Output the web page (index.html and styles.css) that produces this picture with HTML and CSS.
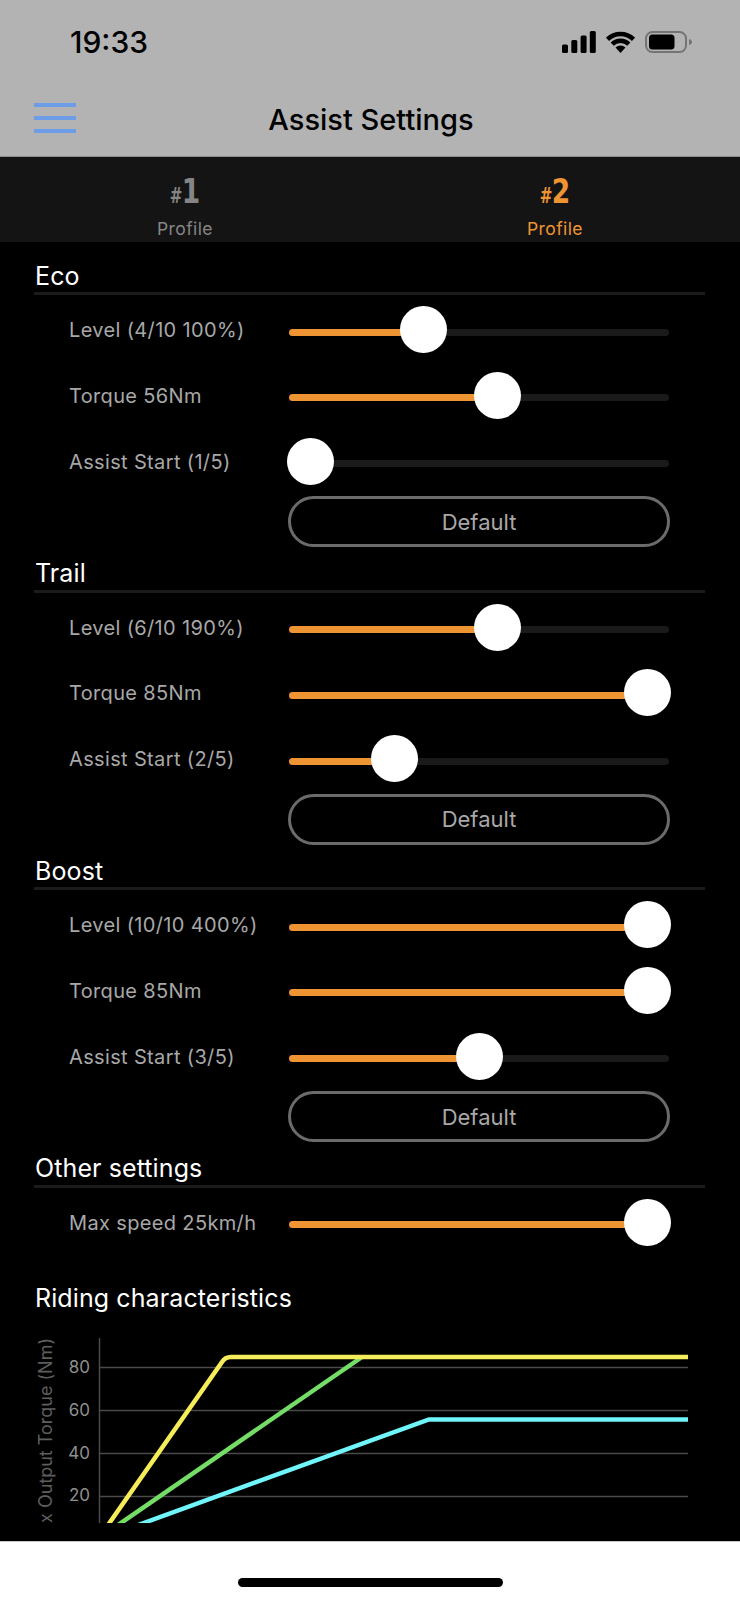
FILE: index.html
```html
<!DOCTYPE html>
<html lang="en">
<head>
<meta charset="utf-8">
<title>Assist Settings</title>
<link rel="stylesheet" href="styles.css">
</head>
<body>
<div class="phone">
  <header class="top">
    <div class="status">
      <span class="time">19:33</span>
      <div class="status-icons">
        <svg class="signal" width="34" height="22" viewBox="0 0 34 22"><rect x="0" y="13.500" width="6" height="8.500" rx="1.500"/><rect x="9.300" y="9" width="6" height="13" rx="1.500"/><rect x="18.600" y="4.500" width="6" height="17.500" rx="1.500"/><rect x="27.800" y="0" width="6" height="22" rx="1.500"/></svg>
        <svg class="wifi" width="29" height="22" viewBox="0 0 29 22"><path d="M14.500 22 9.500 16.500a7 7 0 0 1 10 0Z"/><path d="M1.500 8.300a18.500 18.500 0 0 1 26 0" class="arc"/><path d="M6.200 13.200a11.800 11.800 0 0 1 16.600 0" class="arc"/></svg>
        <svg class="battery" width="48" height="22" viewBox="0 0 48 22"><rect class="shell" x="1" y="1" width="40" height="20" rx="6.500"/><rect x="4" y="3.500" width="25.500" height="15" rx="3.500"/><path class="nub" d="M44 8c2 .5 3 1.500 3 3s-1 2.500-3 3Z"/></svg>
      </div>
    </div>
    <nav class="nav">
      <div class="menu"><i></i><i></i><i></i></div>
      <h1>Assist Settings</h1>
    </nav>
  </header>

  <div class="tabs">
    <div class="tab"><div class="num"><small>#</small><b>1</b></div><div class="tab-label">Profile</div></div>
    <div class="tab active"><div class="num"><small>#</small><b>2</b></div><div class="tab-label">Profile</div></div>
  </div>

  <main class="content">
    <section>
      <h2>Eco</h2>
      <div class="row"><span class="label">Level (4/10 100%)</span><div class="slider" style="--v:.335"><div class="fill"></div><div class="thumb"></div></div></div>
      <div class="row"><span class="label">Torque 56Nm</span><div class="slider" style="--v:.555"><div class="fill"></div><div class="thumb"></div></div></div>
      <div class="row"><span class="label">Assist Start (1/5)</span><div class="slider" style="--v:0"><div class="fill"></div><div class="thumb"></div></div></div>
      <div class="row-btn"><button class="btn">Default</button></div>
    </section>
    <section>
      <h2>Trail</h2>
      <div class="row"><span class="label">Level (6/10 190%)</span><div class="slider" style="--v:.555"><div class="fill"></div><div class="thumb"></div></div></div>
      <div class="row"><span class="label">Torque 85Nm</span><div class="slider" style="--v:1"><div class="fill"></div><div class="thumb"></div></div></div>
      <div class="row"><span class="label">Assist Start (2/5)</span><div class="slider" style="--v:.25"><div class="fill"></div><div class="thumb"></div></div></div>
      <div class="row-btn"><button class="btn">Default</button></div>
    </section>
    <section>
      <h2>Boost</h2>
      <div class="row"><span class="label">Level (10/10 400%)</span><div class="slider" style="--v:1"><div class="fill"></div><div class="thumb"></div></div></div>
      <div class="row"><span class="label">Torque 85Nm</span><div class="slider" style="--v:1"><div class="fill"></div><div class="thumb"></div></div></div>
      <div class="row"><span class="label">Assist Start (3/5)</span><div class="slider" style="--v:.5"><div class="fill"></div><div class="thumb"></div></div></div>
      <div class="row-btn"><button class="btn">Default</button></div>
    </section>
    <section>
      <h2>Other settings</h2>
      <div class="row"><span class="label">Max speed 25km/h</span><div class="slider" style="--v:1"><div class="fill"></div><div class="thumb"></div></div></div>
    </section>
    <h2 class="plain">Riding characteristics</h2>
    <svg class="chart" width="740" height="186" viewBox="0 1338 740 186">
      <g class="grid">
        <path d="M99.500 1339V1524"/>
        <path d="M100 1368.500H688M100 1411.500H688M100 1454.500H688M100 1497.500H688"/>
      </g>
      <g class="ticks">
        <text x="90" y="1374">80</text>
        <text x="90" y="1417">60</text>
        <text x="90" y="1460">40</text>
        <text x="90" y="1502">20</text>
      </g>
      <text class="axis" transform="translate(52 1524) rotate(-90)">x Output Torque (Nm)</text>
      <g class="lines">
        <path class="c" d="M138 1526 429 1420.500H688"/>
        <path class="g" d="M118 1526 362 1358"/>
        <path class="y" d="M108 1526 222 1363Q225 1358 231 1358H688"/>
      </g>
    </svg>
  </main>

  <footer class="home"><div class="indicator"></div></footer>
</div>
</body>
</html>
```

FILE: styles.css
```css
* { box-sizing: border-box; }
html, body { margin: 0; padding: 0; background: #fff; }
body { font-family: Inter, "Liberation Sans", sans-serif; }
.phone { width: 740px; height: 1600px; display: flex; flex-direction: column; overflow: hidden; }

.top { height: 157px; background: #b3b3b3; border-bottom: 1px solid #8c8c8c; flex: none; }
.status { height: 84px; padding: 0 47px 0 70px; display: flex; align-items: center; justify-content: space-between; }
.time { font-size: 30px; font-weight: 500; color: #000; }
.status-icons { display: flex; align-items: center; gap: 10px; }
.signal, .wifi path, .battery rect { fill: #000; }
.wifi .arc { fill: none; stroke: #000; stroke-width: 4.500; }
.battery .shell { fill: none; stroke: #747474; stroke-width: 2; }
.battery .nub { fill: #747474; }

.nav { height: 72px; display: flex; align-items: center; justify-content: center; padding: 0 0 2px 34px; position: relative; }
.menu { position: absolute; left: 34px; top: 19px; width: 42px; display: flex; flex-direction: column; gap: 9.500px; }
.menu i { display: block; height: 3.500px; background: #6d9de6; }
.nav h1 { margin: 0 32px 0 0; font-size: 29px; font-weight: 500; color: #000; }

.tabs { height: 85px; flex: none; background: #141414; display: flex; }
.tab { width: 370px; display: flex; flex-direction: column; align-items: center; padding-top: 15px; color: #858585; }
.tab.active { color: #ef9433; }
.num { font-family: "DejaVu Sans", sans-serif; font-weight: 700; font-size: 34px; line-height: 38px; height: 38px; display: flex; align-items: baseline; margin-right: 6px; }
.num b { display: block; width: 17px; text-align: center; transform: scaleX(.78); }
.num small { font-size: 21px; font-weight: 700; display: block; width: 12px; transform: scaleX(.72); }
.tab-label { font-size: 17.500px; line-height: 24px; margin-top: 7px; letter-spacing: .4px; }

.content { flex: 1; background: #000; padding: 8px 0 0; overflow: hidden; }
section { padding: 0 35px 0 34px; }
h2 { margin: 0 0 2px; height: 45.400px; padding: 10px 0 0 1px; font-size: 25px; line-height: 32px; font-weight: 400; letter-spacing: .1px; color: #fff; border-bottom: 3px solid #1b1b1b; }
h2.plain { border: 0; padding: 0 0 0 35px; height: auto; margin: 27px 0 22.500px; }

.row { height: 65.700px; padding-left: 35px; display: flex; align-items: center; }
.label { width: 220px; flex: none; font-size: 20px; letter-spacing: .35px; color: #a8a8a8; white-space: nowrap; }
.slider { position: relative; width: 380px; height: 7px; margin-top: 4px; background: #1a1a1a; border-radius: 4px; }
.fill { height: 100%; width: calc(var(--v) * 337px + 21px); max-width: 100%; background: #ef9433; border-radius: 4px; }
.thumb { position: absolute; top: -22.500px; left: calc(var(--v) * 337px - 2px); width: 47px; height: 47px; border-radius: 50%; background: #fff; }

.row-btn { padding-left: 254px; margin-top: 2px; }
.btn { display: block; width: 382px; height: 51px; border: 3px solid #6b6b6b; border-radius: 26px; background: transparent; color: #a8a8a8; font: 400 22px Inter, "Liberation Sans", sans-serif; padding: 0; }

.chart { display: block; }
.grid path { stroke: #4a4a4a; stroke-width: 1.500; fill: none; }
.ticks text { fill: #8f8f8f; font-size: 17px; text-anchor: end; }
.axis { fill: #5e5e5e; font-size: 18px; }
.lines path { fill: none; stroke-width: 4.500; }
.lines .y { stroke: #f5ec5a; }
.lines .g { stroke: #74dd66; }
.lines .c { stroke: #6ff5fa; }

.home { flex: none; height: 59px; background: #fff; border-top: 1px solid #c8c8c8; }
.indicator { width: 265px; height: 9px; border-radius: 5px; background: #000; margin: 36px auto 0 238px; }
```
